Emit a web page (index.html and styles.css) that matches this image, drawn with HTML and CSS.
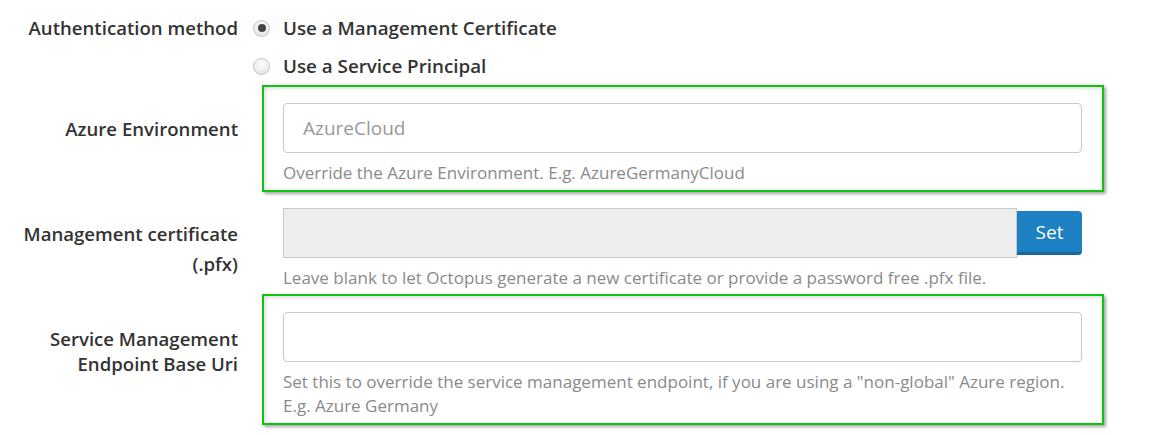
FILE: index.html
```html
<!DOCTYPE html>
<html>
<head>
<meta charset="utf-8">
<link rel="stylesheet" href="styles.css">
</head>
<body>
<div class="form">
  <div class="row row-auth">
    <div class="label">Authentication method</div>
    <div class="radios">
      <label class="radio"><span class="dot checked"></span><span>Use a Management Certificate</span></label>
      <label class="radio"><span class="dot"></span><span>Use a Service Principal</span></label>
    </div>
  </div>

  <div class="row">
    <div class="label label-single">Azure Environment</div>
    <div class="field highlight">
      <div class="input placeholder">AzureCloud</div>
      <div class="help">Override the Azure Environment. E.g. AzureGermanyCloud</div>
    </div>
  </div>

  <div class="row row-cert">
    <div class="label label-multi">Management certificate<br>(.pfx)</div>
    <div class="field">
      <div class="input-group">
        <div class="input disabled"></div>
        <button class="btn">Set</button>
      </div>
      <div class="help">Leave blank to let Octopus generate a new certificate or provide a password free .pfx file.</div>
    </div>
  </div>

  <div class="row">
    <div class="label label-multi2">Service Management<br>Endpoint Base Uri</div>
    <div class="field highlight">
      <div class="input"></div>
      <div class="help">Set this to override the service management endpoint, if you are using a "non-global" Azure region.<br>E.g. Azure Germany</div>
    </div>
  </div>
</div>
</body>
</html>
```

FILE: styles.css
```css
html, body {
  margin: 0;
  padding: 0;
  background: #fff;
}

body {
  font-family: "Open Sans", "Noto Sans", sans-serif;
  color: #333;
  width: 1160px;
  height: 435px;
  overflow: hidden;
}

.form {
  padding-top: 9px;
}

.row {
  display: flex;
  align-items: flex-start;
}

.label {
  width: 238px;
  flex: none;
  text-align: right;
  font-size: 18.6px;
  font-weight: 600;
  line-height: 26px;
  color: #333;
}

.row-auth .label {
  padding-top: 6px;
}

.label-single {
  padding-top: 31px;
}

.label-multi {
  padding-top: 27px;
  line-height: 30px;
}

.label-multi2 {
  padding-top: 32px;
  line-height: 25px;
}

.radios {
  display: flex;
  flex-direction: column;
  margin-left: 15px;
}

.radio {
  display: flex;
  align-items: center;
  height: 38px;
  gap: 13px;
  font-size: 18.8px;
  font-weight: 600;
  color: #333;
}

.dot {
  width: 17px;
  height: 17px;
  border-radius: 50%;
  border: 1px solid #c4c4c4;
  background: radial-gradient(circle at 50% 35%, #fdfdfd 0%, #ececec 60%, #dcdcdc 100%);
  box-sizing: border-box;
  display: flex;
  align-items: center;
  justify-content: center;
}

.dot.checked::after {
  content: "";
  width: 8px;
  height: 8px;
  border-radius: 50%;
  background: #444;
}

.field {
  margin-left: 24px;
  width: 842px;
  box-sizing: border-box;
  border: 2px solid transparent;
  padding: 16px 20px 5px 19px;
}

.row-cert .field {
  margin-top: -2px;
  margin-bottom: -3px;
}

.field.highlight {
  border-color: #11c411;
  box-shadow: 2px 2px 3px rgba(0, 0, 0, 0.35), inset 1px 1px 4px rgba(0, 0, 0, 0.18);
}

.input {
  height: 50px;
  box-sizing: border-box;
  border: 1px solid #c8c8c8;
  border-radius: 4px;
  padding: 0 19px;
  font-size: 19px;
  line-height: 48px;
  background: #fff;
}

.placeholder {
  color: #999;
}

.input-group {
  display: flex;
  align-items: center;
}

.input.disabled {
  flex: 1;
  background: #eeeeee;
  border-radius: 0;
}

.btn {
  height: 44px;
  width: 65px;
  border: none;
  border-bottom: 3px solid #17669c;
  border-radius: 0 4px 4px 0;
  background: #1c80c2;
  color: #fff;
  font-family: inherit;
  font-size: 19px;
  padding: 0;
  margin-left: 0;
}

.help {
  margin-top: 8px;
  font-size: 17px;
  line-height: 24px;
  color: #8a8a8a;
}
```
